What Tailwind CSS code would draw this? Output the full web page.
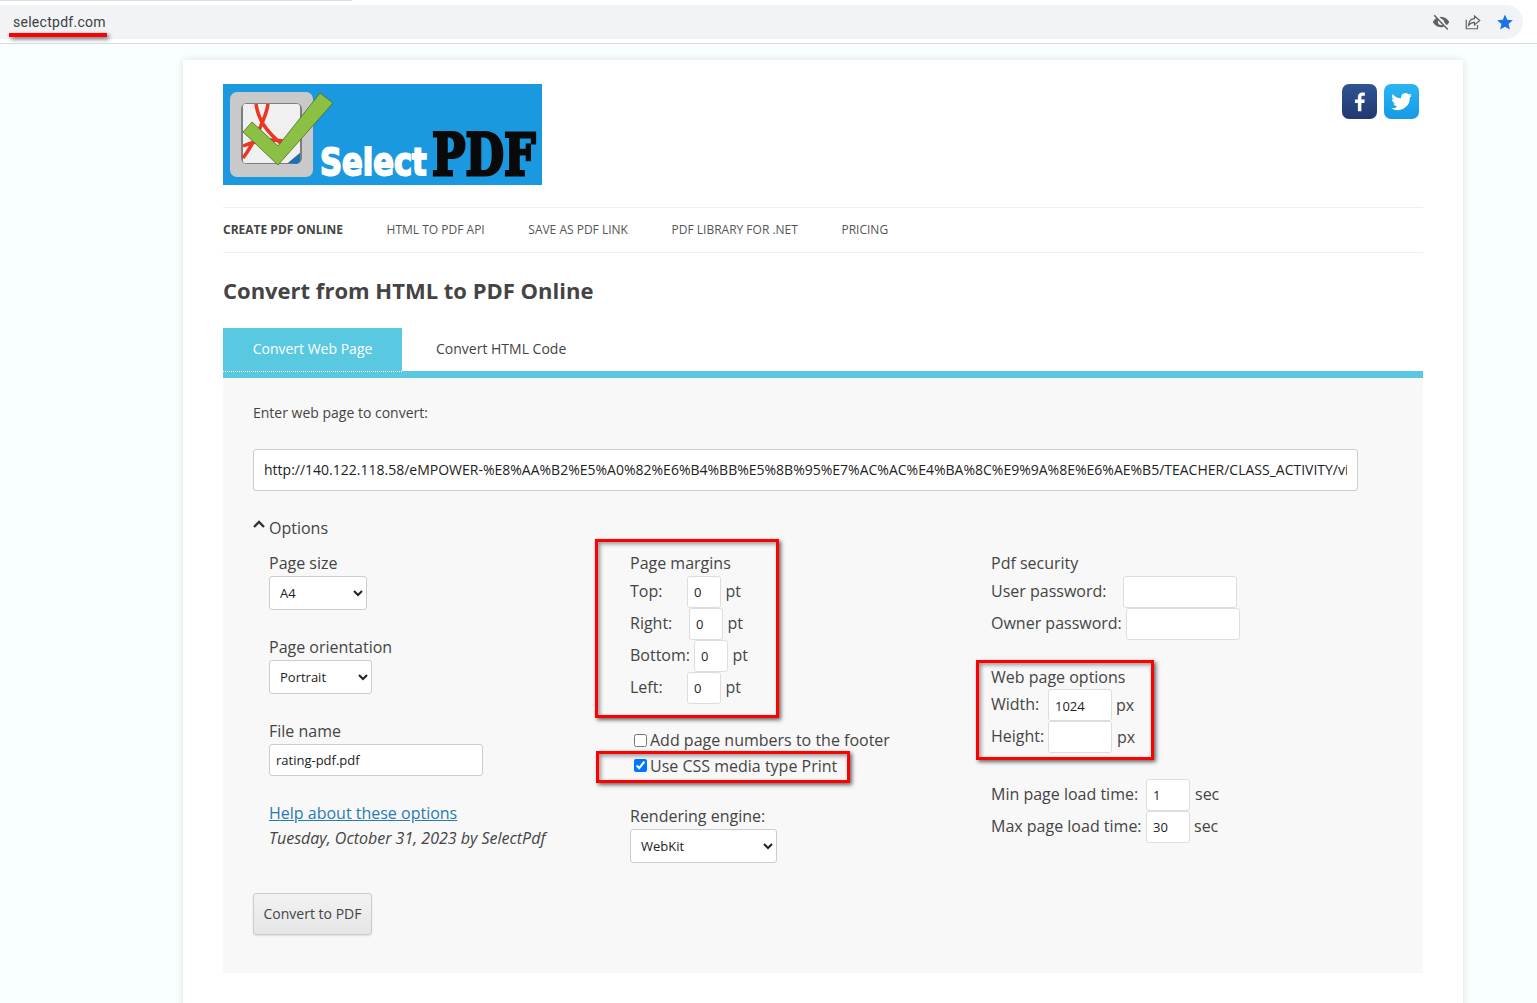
<!DOCTYPE html>
<html lang="en">
<head>
    <meta charset="UTF-8">
    <title>Convert from HTML to PDF Online</title>
    <script src="https://cdn.jsdelivr.net/npm/@tailwindcss/browser@4"></script>
</head>
<body class="relative h-[1003px] overflow-hidden bg-[#f9ffff] font-['Open_Sans',sans-serif] text-[#444]">
    <!-- browser toolbar -->
    <div class="h-[44px] bg-white border-b border-[#dadce0] pt-[5px] relative">
        <div class="absolute left-0 top-0 w-[352px] h-px bg-[#dadce0]"></div>
        <div class="flex items-center h-[34px] w-[1523px] bg-[#f1f3f4] rounded-r-[17px] pl-[13px] pr-[9px]">
            <span class="text-[14px] text-[#3c4043] font-['Roboto',sans-serif] tracking-[0.27px]">selectpdf.com</span>
            <div class="ml-auto flex items-center gap-[14px]">
                <svg class="w-[18px] h-[18px]" viewBox="0 0 24 24"><path fill="#5f6368" d="M12 5C7 5 3 8 1 12c2 4 6 7 11 7s9-3 11-7c-2-4-6-7-11-7zm0 11a4 4 0 1 1 0-8 4 4 0 0 1 0 8z"/><path stroke="#f1f3f4" stroke-width="4" d="M4 1l17 20"/><path stroke="#5f6368" stroke-width="2" d="M3 3l18 19"/></svg>
                <svg class="w-[18px] h-[18px]" viewBox="0 0 24 24" fill="none" stroke="#5f6368" stroke-width="1.6"><path d="M3 9v12h15v-5"/><path d="M14 4l7 6-7 6v-3.5c-4 0-6 1.500-8 4 .5-5 3-9 8-9z"/></svg>
                <svg class="w-[18px] h-[18px]" viewBox="0 0 24 24"><path fill="#1a73e8" d="M12 2l3 7 7.500.7-5.700 5 1.700 7.300L12 18.200 5.500 22l1.700-7.300-5.700-5L9 9z"/></svg>
            </div>
        </div>
    </div>

    <div class="ml-[183px] mt-[16px] w-[1280px] bg-white shadow-[0_0_8px_rgba(0,0,0,0.12)] px-[40px] pt-[24px] h-[960px]">
        <!-- header -->
        <div class="flex justify-between h-[124px] border-b border-[#eee]">
            <svg width="319" height="101" viewBox="0 0 319 101" class="block">
                <rect width="319" height="101" fill="#1a98e0"/>
                <rect x="7" y="8" width="83" height="85" rx="7" fill="#c9c9c9"/>
                <rect x="18" y="19" width="61" height="61" rx="6" fill="#7d7d7d"/>
                <path d="M20 22q0-2 2-2h52q3 0 3 3v46l-12 10H22q-2 0-2-2z" fill="#f0f0f0"/>
                <path d="M33 20c2 14 8 26 28 42M45 20c-1 10-14 40-25 54M20 62c15-6 30-8 44-4" fill="none" stroke="#ee3524" stroke-width="3.500"/>
                <path d="M65 79l12-10v8l-3 3z" fill="#1a6fb5"/>
                <path d="M20 48l9-10 26 24L97 9l13 10-55 62z" fill="#8cc044" stroke="#4d6a24" stroke-width="0.800"/>
                <text transform="translate(97 91) scale(0.805 1)" font-family="DejaVu Sans" font-weight="700" font-size="38" fill="#fff" stroke="#fff" stroke-width="2">Select</text>
                <text transform="translate(209 91) scale(0.78 1)" font-family="DejaVu Serif" font-weight="700" font-size="57" fill="#0a0a0a" stroke="#0a0a0a" stroke-width="3">PDF</text>
            </svg>
            <div class="flex gap-[7px] mr-[4px]">
                <div class="w-[35px] h-[35px] rounded-[7px] bg-gradient-to-b from-[#2f5593] to-[#21386f] flex items-center justify-center">
                    <svg class="w-[22px] h-[22px]" viewBox="0 0 24 24"><path fill="#fff" d="M13.500 22v-9h3.200l.5-3.700h-3.700V7c0-1.100.3-1.800 1.800-1.800h2V1.900C16.900 1.800 15.800 1.700 14.500 1.700c-2.800 0-4.800 1.700-4.800 4.900v2.700H6.500V13h3.200v9z"/></svg>
                </div>
                <div class="w-[35px] h-[35px] rounded-[7px] bg-gradient-to-b from-[#2bb5f3] to-[#149ae6] flex items-center justify-center">
                    <svg class="w-[25px] h-[25px]" viewBox="0 0 24 24"><path fill="#fff" d="M22 5.900c-.7.300-1.500.5-2.400.6.900-.5 1.500-1.300 1.800-2.300-.8.500-1.700.8-2.600 1a4.100 4.100 0 0 0-7 3.700C8.400 8.800 5.400 7.200 3.400 4.700c-1.100 1.900-.5 4.300 1.300 5.500-.7 0-1.300-.2-1.900-.5 0 2 1.400 3.700 3.300 4.100-.6.200-1.200.2-1.900.1.500 1.600 2 2.800 3.900 2.800A8.300 8.300 0 0 1 2 18.400 11.700 11.700 0 0 0 20 8c.8-.6 1.500-1.300 2-2.100z"/></svg>
                </div>
            </div>
        </div>

        <!-- nav -->
        <nav class="flex items-center gap-[43.6px] h-[45px] border-b border-[#eee] text-[12px] uppercase text-[#555]">
            <span class="font-bold text-[#444]">Create PDF Online</span>
            <span>HTML to PDF API</span>
            <span>Save as PDF Link</span>
            <span>PDF Library for .NET</span>
            <span>Pricing</span>
        </nav>

        <h1 class="mt-[20px] h-[34px] leading-[34px] text-[22px] font-bold text-[#444]">Convert from HTML to PDF Online</h1>

        <!-- tabs -->
        <div class="mt-[21px] flex h-[43px] text-[14px] items-start">
            <div class="relative z-10 w-[179px] h-[44px] pb-[2px] bg-[#59c8e1] border-b border-dotted border-white text-white flex items-center justify-center">Convert Web Page</div>
            <div class="pl-[34px] h-[43px] pb-[2px] flex items-center text-[#444]">Convert HTML Code</div>
        </div>
        <div class="h-[7px] bg-[#59c8e1]"></div>

        <!-- panel -->
        <div class="bg-[#f8f8f8] h-[595px] px-[30px] pt-[25px]">
            <p class="text-[14px] leading-[20px]">Enter web page to convert:</p>
            <input type="text" class="mt-[26px] block w-[1105px] h-[42px] px-[10px] pb-[2px] bg-white border border-[#ccc] rounded-[3px] text-[14px] text-[#222]" value="http://140.122.118.58/eMPOWER-%E8%AA%B2%E5%A0%82%E6%B4%BB%E5%8B%95%E7%AC%AC%E4%BA%8C%E9%9A%8E%E6%AE%B5/TEACHER/CLASS_ACTIVITY/view">

            <div class="mt-[26px] flex items-center h-[22px] text-[16px]">
                <svg class="w-[12px] h-[8px] mr-[4px] mb-[8px]" viewBox="0 0 12 8" fill="none" stroke="#333" stroke-width="2.400"><path d="M1 7l5-5 5 5"/></svg>
                <span>Options</span>
            </div>

            <div class="mt-[11px] ml-[16px] grid grid-cols-[361px_361px_1fr] text-[16px]">
                <!-- column 1 -->
                <div>
                    <div class="h-[26px] leading-[26px]">Page size</div>
                    <select class="block w-[98px] h-[34px] pl-[6px] bg-white border border-[#ccc] rounded-[3px] text-[13px] text-[#222]"><option>A4</option></select>
                    <div class="mt-[24px] h-[26px] leading-[26px]">Page orientation</div>
                    <select class="block w-[103px] h-[34px] pl-[6px] bg-white border border-[#ccc] rounded-[3px] text-[13px] text-[#222]"><option>Portrait</option></select>
                    <div class="mt-[24px] h-[26px] leading-[26px]">File name</div>
                    <input type="text" class="block w-[214px] h-[32px] px-[6px] bg-white border border-[#ccc] rounded-[3px] text-[13px] text-[#222]" value="rating-pdf.pdf">
                    <a class="block mt-[24px] h-[26px] leading-[26px] text-[#2a7ab0] underline">Help about these options</a>
                    <div class="h-[25px] leading-[25px] italic">Tuesday, October 31, 2023 by SelectPdf</div>
                </div>

                <!-- column 2 -->
                <div>
                    <div class="h-[26px] leading-[26px]">Page margins</div>
                    <div class="flex items-center h-[32px]"><span class="w-[57px] -mt-[2px]">Top:</span><input class="w-[34px] h-[32px] px-[6px] bg-white border border-[#ddd] rounded-[3px] text-[13px] text-[#222]" value="0"><span class="ml-[4.5px] -mt-[2px]">pt</span></div>
                    <div class="flex items-center h-[32px]"><span class="w-[59px] -mt-[2px]">Right:</span><input class="w-[34px] h-[32px] px-[6px] bg-white border border-[#ddd] rounded-[3px] text-[13px] text-[#222]" value="0"><span class="ml-[4.5px] -mt-[2px]">pt</span></div>
                    <div class="flex items-center h-[32px]"><span class="w-[64px] -mt-[2px]">Bottom:</span><input class="w-[34px] h-[32px] px-[6px] bg-white border border-[#ddd] rounded-[3px] text-[13px] text-[#222]" value="0"><span class="ml-[4.5px] -mt-[2px]">pt</span></div>
                    <div class="flex items-center h-[32px]"><span class="w-[57px] -mt-[2px]">Left:</span><input class="w-[34px] h-[32px] px-[6px] bg-white border border-[#ddd] rounded-[3px] text-[13px] text-[#222]" value="0"><span class="ml-[4.5px] -mt-[2px]">pt</span></div>
                    <label class="mt-[23px] ml-[4px] flex items-center h-[26px]"><input type="checkbox" class="w-[13px] h-[13px] mr-[3px]"><span>Add page numbers to the footer</span></label>
                    <label class="ml-[4px] flex items-center h-[26px]"><input type="checkbox" checked class="w-[13px] h-[13px] mr-[3px] -mt-[2px]"><span>Use CSS media type Print</span></label>
                    <div class="mt-[24px] h-[26px] leading-[26px]">Rendering engine:</div>
                    <select class="block w-[147px] h-[34px] pl-[6px] bg-white border border-[#ccc] rounded-[3px] text-[13px] text-[#222]"><option>WebKit</option></select>
                </div>

                <!-- column 3 -->
                <div>
                    <div class="h-[26px] leading-[26px]">Pdf security</div>
                    <div class="flex items-center h-[32px]"><span class="w-[132px] -mt-[2px]">User password:</span><input class="w-[114px] h-[32px] bg-white border border-[#ddd] rounded-[3px]"></div>
                    <div class="flex items-center h-[32px]"><span class="w-[135px] -mt-[2px]">Owner password:</span><input class="w-[114px] h-[32px] bg-white border border-[#ddd] rounded-[3px]"></div>
                    <div class="mt-[24px] h-[25px] leading-[26px]">Web page options</div>
                    <div class="flex items-center h-[32px]"><span class="w-[57px] -mt-[2px]">Width:</span><input class="w-[64px] h-[32px] px-[6px] pt-[1px] bg-white border border-[#ddd] rounded-[3px] text-[13px] text-[#222]" value="1024"><span class="ml-[4px]">px</span></div>
                    <div class="flex items-center h-[32px]"><span class="w-[57px] -mt-[2px]">Height:</span><input class="w-[64px] h-[32px] bg-white border border-[#ddd] rounded-[3px]"><span class="ml-[5px]">px</span></div>
                    <div class="mt-[26px] flex items-center h-[32px]"><span class="w-[155px] -mt-[2px]">Min page load time:</span><input class="w-[44px] h-[32px] px-[6px] bg-white border border-[#ddd] rounded-[3px] text-[13px] text-[#222]" value="1"><span class="ml-[5px] -mt-[2px]">sec</span></div>
                    <div class="flex items-center h-[32px]"><span class="w-[155px] -mt-[2px]">Max page load time:</span><input class="w-[44px] h-[32px] px-[6px] bg-white border border-[#ddd] rounded-[3px] text-[13px] text-[#222]" value="30"><span class="ml-[4px] -mt-[2px]">sec</span></div>
                </div>
            </div>

            <button class="mt-[30px] block w-[119px] h-[42px] pb-[2px] bg-gradient-to-b from-[#f2f2f2] to-[#e6e6e6] border border-[#ccc] rounded-[3px] shadow-[0_1px_2px_rgba(0,0,0,0.1)] text-[14px] text-[#444]">Convert to PDF</button>
        </div>
    </div>

    <!-- red annotations drawn over the screenshot -->
    <div class="absolute left-[9px] top-[33px] w-[98px] h-[4px] bg-[#f00] shadow-[2px_2px_4px_rgba(0,0,0,0.6)]"></div>
    <div class="absolute left-[595px] top-[539px] w-[184px] h-[179px] border-[3px] border-[#f00] shadow-[2px_2px_4px_rgba(0,0,0,0.6),inset_2px_2px_4px_rgba(0,0,0,0.4)]"></div>
    <div class="absolute left-[596px] top-[751px] w-[254px] h-[32px] border-[3px] border-[#f00] shadow-[2px_2px_4px_rgba(0,0,0,0.6),inset_2px_2px_4px_rgba(0,0,0,0.4)]"></div>
    <div class="absolute left-[976px] top-[660px] w-[178px] h-[100px] border-[3px] border-[#f00] shadow-[2px_2px_4px_rgba(0,0,0,0.6),inset_2px_2px_4px_rgba(0,0,0,0.4)]"></div>
</body>
</html>
